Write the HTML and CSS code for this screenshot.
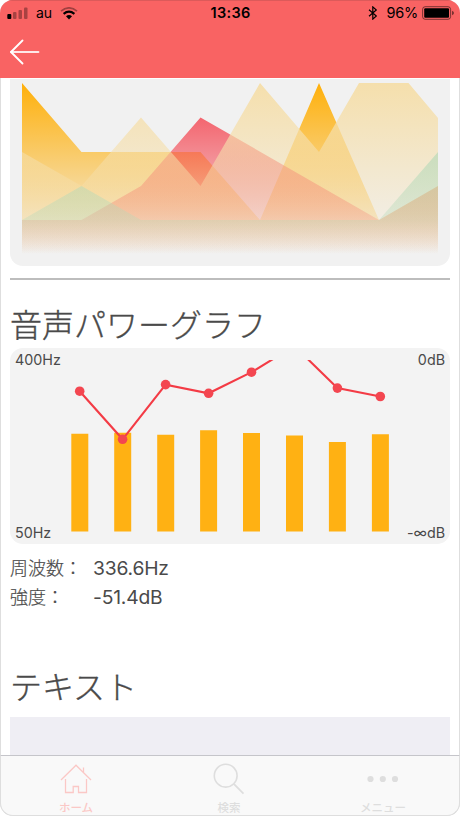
FILE: index.html
```html
<!DOCTYPE html>
<html lang="ja">
<head>
<meta charset="utf-8">
<title>音声パワーグラフ</title>
<link rel="stylesheet" href="styles.css">
</head>
<body>
<div class="phone">
  <header class="header">
    <div class="status">
      <div class="status-left">
        <svg width="22" height="13" viewBox="0 0 22 13"><rect x="0.3" y="7" width="4" height="5" rx="1"/><g opacity=".32"><rect x="6" y="5" width="3.5" height="7" rx="1"/><rect x="11.5" y="3" width="3.5" height="9" rx="1"/><rect x="17" y="0.5" width="3.5" height="11.5" rx="1"/></g></svg>
        <span class="carrier">au</span>
        <svg width="18" height="13" viewBox="0 0 18 13"><path d="M1 4.1Q9-2.3 17 4.1" fill="none" stroke="#000" stroke-width="1.8" opacity=".35"/><path d="M3.6 6.8Q9 2.5 14.4 6.8" fill="none" stroke="#000" stroke-width="2.2"/><path d="M6 9.2Q9 7 12 9.2L9 12.4z"/></svg>
      </div>
      <span class="clock">13:36</span>
      <div class="status-right">
        <svg width="10" height="14" viewBox="0 0 10 14" fill="none" stroke="#000" stroke-width="1.2"><path d="M1 3.8 8.3 10 4.8 13.1V.9L8.3 4 1 10.2"/></svg>
        <span class="percent">96%</span>
        <svg width="32" height="14" viewBox="0 0 32 14"><rect x=".6" y=".7" width="28" height="12.6" rx="2.6" fill="none" stroke="#000" stroke-opacity=".5"/><rect x="2.2" y="2.2" width="24.8" height="9.6" rx="1"/><path d="M30 4.8q2 .7 2 2.2t-2 2.2z" opacity=".5"/></svg>
      </div>
    </div>
    <div class="nav"><svg width="31" height="26" viewBox="0 0 31 26" fill="none" stroke="#fff" stroke-width="1.8" stroke-linecap="round" stroke-linejoin="round"><path d="M12.5 1.5 1 13 12.5 24.5"/><path d="M1 13H28.5" stroke-opacity=".85"/></svg></div>
  </header>
  <main class="content">
    <section class="card emotion">
      <svg width="440" height="187" viewBox="10 79 440 187">
        <defs>
          <linearGradient id="amber" gradientUnits="userSpaceOnUse" x1="0" y1="83" x2="0" y2="254"><stop stop-color="#ffb00a"/><stop offset="1" stop-color="#ffb00a" stop-opacity="0"/></linearGradient>
          <linearGradient id="red" gradientUnits="userSpaceOnUse" x1="0" y1="83" x2="0" y2="254"><stop stop-color="#f4424e"/><stop offset="1" stop-color="#f4424e" stop-opacity="0"/></linearGradient>
          <linearGradient id="cream" gradientUnits="userSpaceOnUse" x1="0" y1="83" x2="0" y2="254"><stop stop-color="#f5dfac"/><stop offset="1" stop-color="#f5dfac" stop-opacity="0"/></linearGradient>
          <linearGradient id="green" gradientUnits="userSpaceOnUse" x1="0" y1="83" x2="0" y2="254"><stop stop-color="#b4d9b8"/><stop offset=".8" stop-color="#b4d9b8" stop-opacity=".32"/><stop offset="1" stop-color="#d8e0d0" stop-opacity="0"/></linearGradient>
        </defs>
        <path fill="url(#amber)" d="M22 83 81.5 152H200.5L260 220 319 83 379 220 438 186V254H22z"/>
        <path fill="url(#red)" d="M22 220H81.5L141 186 200.5 117.5 379 220 438 186V254H22z"/>
        <path fill="url(#cream)" d="M22 152 81.5 186 141 117.5 200.5 186 260 83 319 152 359 83H408.5L438 118V254H22z"/>
        <path fill="url(#green)" d="M22 220 81.5 186 141 220H379L438 152V254H22z"/>
      </svg>
    </section>
    <hr class="rule">
    <h2 class="title">音声パワーグラフ</h2>
    <section class="card power">
      <div class="axis"><span>400Hz</span><span>50Hz</span></div>
      <svg class="plot" width="322" height="172" viewBox="69 360 322 172">
        <g fill="#ffb113"><path d="M71.3 433.7h17V531.6h-17z"/><path d="M114.2 432.7h17V531.6h-17z"/><path d="M157.2 434.7h17V531.6h-17z"/><path d="M200.1 430.2h17V531.6h-17z"/><path d="M243 433h17V531.6h-17z"/><path d="M286 435.5h17V531.6h-17z"/><path d="M328.9 442h17V531.6h-17z"/><path d="M371.9 434.2h17V531.6h-17z"/></g>
        <path d="M79.7 391.2 122.6 439.3 165.6 384.6 208.6 393.3 251.5 372.2 294.4 346 337.4 388.1 380.3 396.5" fill="none" stroke="#f33b45" stroke-width="2.1"/>
        <g fill="#f34650"><circle cx="79.7" cy="391.2" r="4.8"/><circle cx="122.6" cy="439.3" r="4.8"/><circle cx="165.6" cy="384.6" r="4.8"/><circle cx="208.6" cy="393.3" r="4.8"/><circle cx="251.5" cy="372.2" r="4.8"/><circle cx="337.4" cy="388.1" r="4.8"/><circle cx="380.3" cy="396.5" r="4.8"/></g>
      </svg>
      <div class="axis axis-right"><span>0dB</span><span>-∞dB</span></div>
    </section>
    <dl class="readings">
      <dt>周波数：</dt><dd>336.6Hz</dd>
      <dt>強度：</dt><dd>-51.4dB</dd>
    </dl>
    <h2 class="title text-title">テキスト</h2>
    <div class="textbox"></div>
  </main>
  <nav class="tabs">
    <a class="tab active">
      <svg width="34" height="32" viewBox="0 0 34 32" fill="none" stroke="currentColor" stroke-width="1.3"><path d="M2 17 17 2.2 32 17"/><path d="M24.5 9V4.5M6.5 16V29.5H14.2V23.5H19.5V29.5H27.5V16"/></svg>
      <span>ホーム</span>
    </a>
    <a class="tab">
      <svg width="34" height="32" viewBox="0 0 34 32" fill="none" stroke="currentColor" stroke-width="1.6"><circle cx="13.7" cy="12.7" r="11.4"/><path d="M21.8 20.8 31.5 30.7" stroke-width="1.8"/></svg>
      <span>検索</span>
    </a>
    <a class="tab">
      <svg width="34" height="32" viewBox="0 0 34 32" fill="currentColor"><circle cx="4.5" cy="16" r="3.1"/><circle cx="16.8" cy="16" r="3.1"/><circle cx="29" cy="16" r="3.1"/></svg>
      <span>メニュー</span>
    </a>
  </nav>
</div>
</body>
</html>
```
FILE: styles.css
```css
* { box-sizing: border-box; }
body {
  margin: 0;
  background: #fff;
  color: #4a4a4a;
  font-family: Inter, "Noto Sans CJK JP", sans-serif;
}
svg { display: block; flex: none; }
.phone {
  width: 460px;
  height: 816px;
  display: flex;
  flex-direction: column;
  overflow: hidden;
  border-radius: 13px;
  box-shadow: inset 0 0 0 1px #d9d9d9;
}
.header { height: 78px; flex: none; background: #f96363; box-shadow: inset 0 1px 0 #dc5a5a; }
.status {
  height: 26px;
  padding: 0 6px 0 7px;
  display: grid;
  grid-template-columns: 1fr auto 1fr;
  align-items: center;
  color: #000;
  font-size: 14px;
  line-height: 26px;
}
.status-left, .status-right { display: flex; align-items: center; }
.status-right { justify-content: flex-end; }
.carrier { margin: 0 8px 0 7px; }
.clock { font-weight: 600; font-size: 14.5px; letter-spacing: .3px; }
.percent { margin: 0 4px 0 8px; font-size: 14.5px; letter-spacing: -.2px; }
.nav { padding: 13px 0 0 10px; }
.content { flex: 1; min-height: 0; overflow: hidden; padding: 1px 9px 0; border: solid #dedede; border-width: 0 1px; }
.card { background: #f3f3f3; border-radius: 13px; }
.emotion { height: 187px; border-radius: 0 0 13px 13px; overflow: hidden; background: #f1f1f1; }
.rule { margin: 12px 0 0; border: 0; height: 2px; background: #bdbdbd; }
.title { margin: 20px 0 0; padding-top: 2px; font-size: 32px; line-height: 48px; height: 48px; font-weight: 300; white-space: nowrap; -webkit-text-stroke: .35px currentColor; }
.power { height: 196px; display: flex; padding: 0 5px; }
.axis { width: 54px; display: flex; flex-direction: column; justify-content: space-between; padding: 3px 0 2px; font-size: 14.3px; line-height: 18px; white-space: nowrap; }
.axis-right { flex: 1; text-align: right; }
.plot { margin-top: 12px; }
.readings { margin: 9px 0 0; display: grid; grid-template-columns: 83px 1fr; font-size: 18px; line-height: 29px; grid-auto-rows: 29px; font-weight: 300; }
.readings dt { padding-top: 1px; -webkit-text-stroke: .2px currentColor; }
.readings dd { margin: 0; padding-top: 1px; font-size: 19.3px; font-weight: 400; letter-spacing: -.2px; }
.text-title { margin-top: 51px; }
.textbox { margin-top: 7px; height: 60px; background: #efeef4; }
.tabs {
  height: 61px;
  flex: none;
  display: grid;
  grid-template-columns: 150px 156px 1fr;
  background: #f9f9f9;
  border: 1px solid #dedede;
  border-top: 1px solid #c5c5ca;
  border-radius: 0 0 13px 13px;
}
.tab { display: flex; flex-direction: column; align-items: center; padding-top: 7px; color: #dedede; }
.tab.active { color: #fbc8c6; }
.tab span { font-size: 11.5px; line-height: 16px; margin-top: 5px; font-weight: 500; }
```
